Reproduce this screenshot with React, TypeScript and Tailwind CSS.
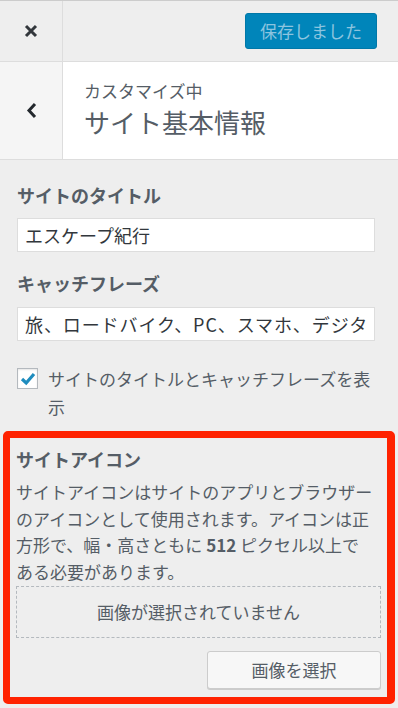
import React from "react"

const jp = { fontFamily: '"Noto Sans CJK JP", "Noto Sans", sans-serif' }

function CloseIcon() {
  return (
    <svg width="14" height="14" viewBox="0 0 14 14" className="text-[#32373c]">
      <path d="M2 2 L12 12 M12 2 L2 12" stroke="currentColor" strokeWidth="3" strokeLinecap="butt" fill="none" />
    </svg>
  )
}

function BackIcon() {
  return (
    <svg width="11" height="17" viewBox="0 0 11 17" className="text-[#23282d]">
      <path d="M9 2 L3 8.5 L9 15" stroke="currentColor" strokeWidth="3" fill="none" strokeLinejoin="miter" />
    </svg>
  )
}

export default function App() {
  return (
    <div className="w-[398px] h-[708px] overflow-hidden bg-[#eeeeee] text-[#555d66]" style={jp}>
      {/* top bar */}
      <div className="flex h-[62px] border-t border-b border-t-[#cccccc] border-b-[#dddddd] bg-[#eeeeee]">
        <div className="w-[63px] flex items-center justify-center border-r border-[#dddddd]">
          <CloseIcon />
        </div>
        <div className="flex-1 flex items-center justify-end pr-[21px]">
          <button className="w-[132px] h-[36px] rounded-[3px] bg-[#0085ba] border border-[#0078a8] text-[17px] leading-none text-[#8cc4df] mb-[1px]">
            保存しました
          </button>
        </div>
      </div>

      {/* header */}
      <div className="flex h-[98px] border-b border-[#dddddd]">
        <div className="w-[63px] flex items-center justify-center bg-[#f5f5f5] border-r border-[#dddddd]">
          <BackIcon />
        </div>
        <div className="flex-1 bg-white pl-[21px] pt-[18px]">
          <div className="text-[17px] leading-[22px] text-[#555d66]">カスタマイズ中</div>
          <div className="text-[26px] leading-[34px] mt-[3px] text-[#555d66]">サイト基本情報</div>
        </div>
      </div>

      {/* controls */}
      <div className="px-[17px] pt-[23px]">
        <div className="text-[18px] leading-[24px] font-bold text-[#555d66] mb-[11px]">サイトのタイトル</div>
        <input
          readOnly
          value="エスケープ紀行"
          className="block w-[358px] h-[34px] bg-white border border-[#dddddd] px-[7px] text-[18px] text-[#32373c] outline-none"
          style={jp}
        />
        <div className="text-[18px] leading-[24px] font-bold text-[#555d66] mt-[19px] mb-[12px]">キャッチフレーズ</div>
        <input
          readOnly
          value="旅、ロードバイク、PC、スマホ、デジタルガジェット"
          className="block w-[358px] h-[34px] bg-white border border-[#dddddd] px-[7px] text-[18px] tracking-[0.9px] text-[#32373c] outline-none"
          style={jp}
        />
        <div className="flex items-start mt-[24px]">
          <div className="w-[21px] h-[21px] shrink-0 mt-[3px] bg-white border border-[#b4b9be] shadow-[inset_0_1px_2px_rgba(0,0,0,0.1)] flex items-center justify-center">
            <svg width="16" height="14" viewBox="0 0 16 14">
              <path d="M2 7 L6.2 11 L14 2" stroke="#1e8cbe" strokeWidth="3.2" fill="none" />
            </svg>
          </div>
          <div className="ml-[10px] text-[17px] leading-[28px] text-[#555d66]">サイトのタイトルとキャッチフレーズを表示</div>
        </div>
      </div>

      {/* site icon */}
      <div className="mx-[3px] mt-[10px] h-[273px] border-[7px] border-r-[8px] border-[#ff2200] rounded-[5px] bg-[#eeeeee] px-[6px] pt-[9px]">
        <div className="text-[18px] leading-[24px] font-bold text-[#555d66]">サイトアイコン</div>
        <p className="mt-[8px] text-[17px] leading-[26.7px] text-[#555d66] whitespace-nowrap">
          サイトアイコンはサイトのアプリとブラウザー
          <br />
          のアイコンとして使用されます。アイコンは正
          <br />
          方形で、幅・高さともに <b>512</b> ピクセル以上で
          <br />
          ある必要があります。
        </p>
        <div className="h-[52px] border border-dashed border-[#b4b9be] flex items-center justify-center text-[17px] text-[#555d66]">
          画像が選択されていません
        </div>
        <div className="flex justify-end mt-[13px]">
          <button className="w-[174px] h-[38px] bg-[#f7f7f7] border border-[#cccccc] rounded-[3px] shadow-[0_1px_0_#cccccc] text-[17px] text-[#555d66]" style={jp}>
            画像を選択
          </button>
        </div>
      </div>
    </div>
  )
}
